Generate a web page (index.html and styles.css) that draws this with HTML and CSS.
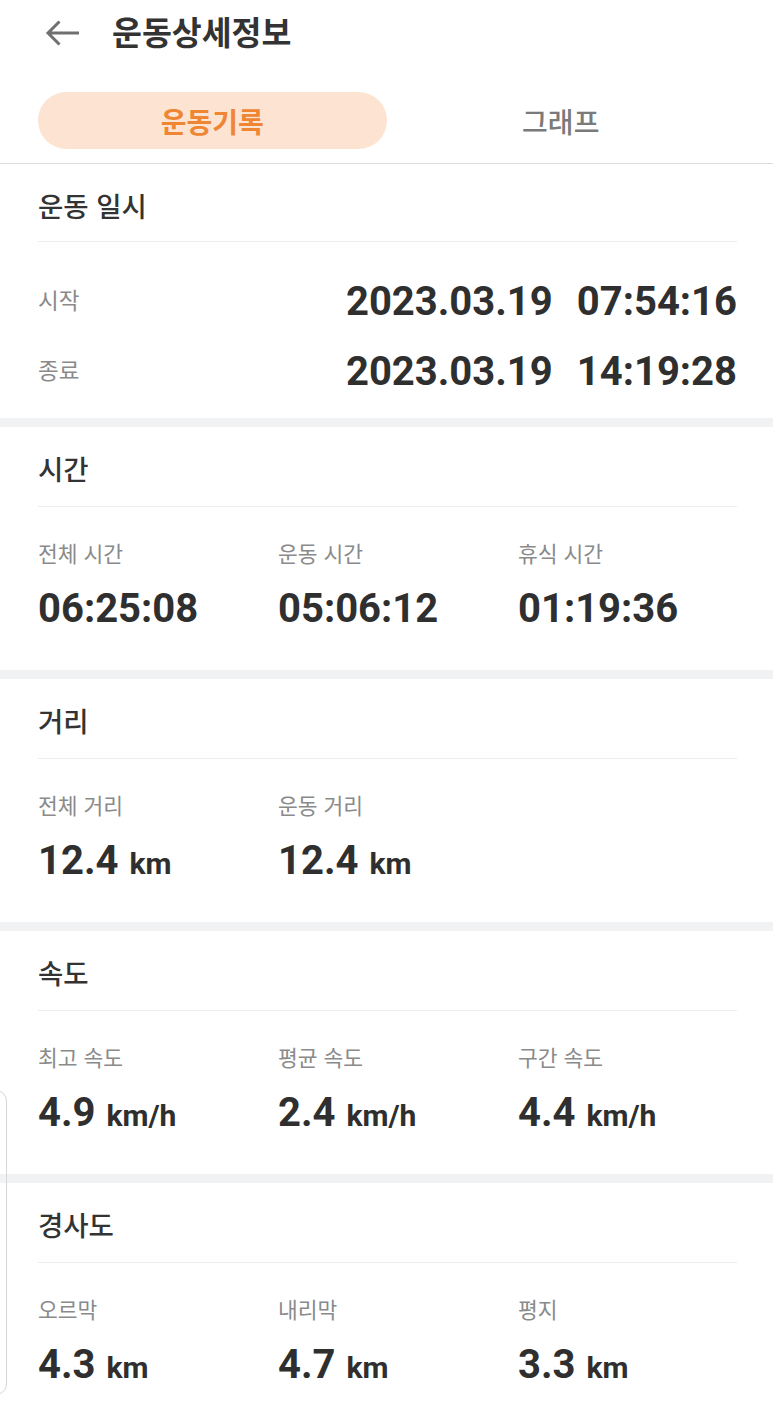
FILE: index.html
```html
<!DOCTYPE html>
<html lang="ko">
<head>
<meta charset="utf-8">
<title>운동상세정보</title>
<link rel="stylesheet" href="styles.css">
</head>
<body>
<header class="appbar">
  <svg class="back" width="36" height="28" viewBox="0 0 36 28" aria-hidden="true">
    <path d="M4 14 H35 M15.5 2.5 L4 14 L15.5 25.5" fill="none" stroke="#707070" stroke-width="3"/>
  </svg>
  <h1 class="title">운동상세정보</h1>
</header>

<nav class="tabs">
  <div class="tab tab-active">운동기록</div>
  <div class="tab">그래프</div>
</nav>

<section class="card card-first">
  <div class="card-head">운동 일시</div>
  <div class="card-body dates">
    <div class="date-row">
      <span class="label">시작</span>
      <span class="value"><span>2023.03.19</span><span class="time">07:54:16</span></span>
    </div>
    <div class="date-row">
      <span class="label">종료</span>
      <span class="value"><span>2023.03.19</span><span class="time">14:19:28</span></span>
    </div>
  </div>
</section>

<section class="card">
  <div class="card-head">시간</div>
  <div class="card-body grid">
    <div class="stat"><div class="label">전체 시간</div><div class="value">06:25:08</div></div>
    <div class="stat"><div class="label">운동 시간</div><div class="value">05:06:12</div></div>
    <div class="stat"><div class="label">휴식 시간</div><div class="value">01:19:36</div></div>
  </div>
</section>

<section class="card">
  <div class="card-head">거리</div>
  <div class="card-body grid">
    <div class="stat"><div class="label">전체 거리</div><div class="value">12.4 <span class="unit">km</span></div></div>
    <div class="stat"><div class="label">운동 거리</div><div class="value">12.4 <span class="unit">km</span></div></div>
  </div>
</section>

<section class="card">
  <div class="card-head">속도</div>
  <div class="card-body grid">
    <div class="stat"><div class="label">최고 속도</div><div class="value">4.9 <span class="unit">km/h</span></div></div>
    <div class="stat"><div class="label">평균 속도</div><div class="value">2.4 <span class="unit">km/h</span></div></div>
    <div class="stat"><div class="label">구간 속도</div><div class="value">4.4 <span class="unit">km/h</span></div></div>
  </div>
</section>

<section class="card card-last">
  <div class="card-head">경사도</div>
  <div class="card-body grid">
    <div class="stat"><div class="label">오르막</div><div class="value">4.3 <span class="unit">km</span></div></div>
    <div class="stat"><div class="label">내리막</div><div class="value">4.7 <span class="unit">km</span></div></div>
    <div class="stat"><div class="label">평지</div><div class="value">3.3 <span class="unit">km</span></div></div>
  </div>
</section>

<div class="edge-panel" aria-hidden="true"></div>
</body>
</html>
```

FILE: styles.css
```css
* {
  box-sizing: border-box;
}

html, body {
  margin: 0;
  padding: 0;
  background: #ffffff;
}

body {
  position: relative;
  width: 773px;
  min-height: 1419px;
  font-family: "Noto Sans CJK KR", "Noto Sans", sans-serif;
  color: #333333;
  overflow: hidden;
}

.appbar {
  height: 66px;
  display: flex;
  align-items: center;
  padding-left: 44px;
  gap: 32px;
}

.back {
  display: block;
}

.title {
  margin: 0 0 4px;
  font-size: 32.5px;
  font-weight: 700;
  color: #333333;
  line-height: 40px;
}

.tabs {
  display: grid;
  grid-template-columns: 1fr 1fr;
  padding: 26px 38px 14px;
  border-bottom: 1px solid #dddddd;
}

.tab {
  height: 57px;
  display: flex;
  align-items: center;
  justify-content: center;
  font-size: 28px;
  font-weight: 500;
  color: #7a7a7a;
  border-radius: 29px;
}

.tab-active {
  background: #fde3d1;
  color: #ef8633;
  font-weight: 700;
}

.card {
  padding: 0 36px 37px 38px;
  border-bottom: 9px solid #f1f2f4;
}

.card-last {
  border-bottom: none;
}

.card-head {
  height: 80px;
  display: flex;
  align-items: center;
  font-size: 27.5px;
  font-weight: 500;
  color: #333333;
  border-bottom: 1px solid #ececec;
  padding-top: 2px;
}

.card-first {
  padding-bottom: 22px;
}

.card-first .card-head {
  height: 78px;
  padding-top: 4px;
}

.dates {
  display: flex;
  flex-direction: column;
  gap: 22px;
  padding-top: 36px;
}

.date-row {
  display: flex;
  align-items: center;
  justify-content: space-between;
  height: 48px;
}

.date-row .label {
  margin-top: -6px;
  font-size: 22.5px;
}

.label {
  font-size: 21.5px;
  line-height: 30px;
  color: #8a8a8a;
  font-weight: 400;
}

.value {
  font-family: Roboto, "Liberation Sans", sans-serif;
  font-weight: 700;
  font-size: 40px;
  line-height: 48px;
  height: 48px;
  color: #2f2f2f;
  white-space: nowrap;
}

.date-row .value {
  display: flex;
  gap: 24px;
}

.unit {
  font-size: 30px;
  line-height: 1;
  margin-left: 1px;
}

.grid {
  display: grid;
  grid-template-columns: 240px 240px 1fr;
  padding-top: 31px;
}

.stat {
  display: flex;
  flex-direction: column;
  gap: 17px;
}

.edge-panel {
  position: absolute;
  left: -24px;
  top: 1090px;
  width: 31px;
  height: 305px;
  border: 1px solid #d6d6d6;
  border-radius: 11px;
  background: transparent;
}
```
